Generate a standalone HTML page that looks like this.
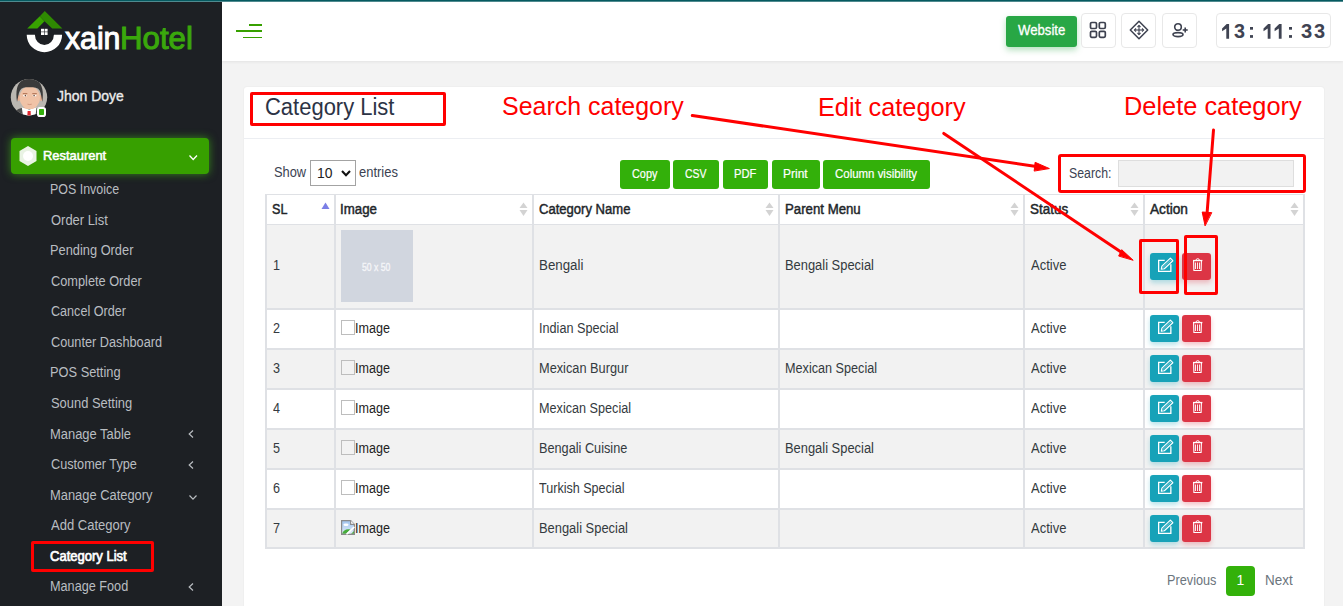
<!DOCTYPE html>
<html><head><meta charset="utf-8"><style>
html,body{margin:0;padding:0;}
body{width:1343px;height:606px;overflow:hidden;position:relative;font-family:"Liberation Sans",sans-serif;}
.t{position:absolute;white-space:nowrap;line-height:1;transform-origin:0 0;}
</style></head><body>
<div style="position:absolute;left:0px;top:0px;width:1343px;height:606px;background:#f3f3f3"></div>
<div style="position:absolute;left:0px;top:0px;width:222px;height:606px;background:#1d2024"></div>
<div style="position:absolute;left:222px;top:2px;width:1121px;height:59px;background:#fff;box-shadow:0 1px 3px rgba(0,0,0,.07)"></div>
<div style="position:absolute;left:0px;top:0px;width:1343px;height:1px;background:#055a60"></div>
<div style="position:absolute;left:0px;top:1px;width:1343px;height:1px;background:#4f8a8f"></div>
<svg style="position:absolute;left:0;top:0" width="222" height="70">
<polygon points="27.2,28.4 39.8,16.2 44.5,21.2 37.4,28.4" fill="#38a300"/>
<polygon points="39.8,16.2 44.8,11 62.4,28.4 52.2,28.4 44.8,21.6 44.5,21.2" fill="#2f8a02"/>
<path d="M26.7,34.7 A17.7,17.5 0 0 0 62.1,34.7 L53.9,34.7 A9.5,10.3 0 0 1 34.9,34.7 Z" fill="#fff"/>
<rect x="41" y="28.8" width="3" height="2.8" fill="#fff"/><rect x="44.6" y="28.8" width="3" height="2.8" fill="#fff"/>
<rect x="41" y="32.2" width="3" height="2.8" fill="#fff"/><rect x="44.6" y="32.2" width="3" height="2.8" fill="#fff"/>
</svg>
<div class="t" style="left:64.59787310419098px;top:23.16px;font-size:31px;color:#ffffff;-webkit-text-stroke:1.0px #ffffff;transform:scaleX(0.9746);">xain</div>
<div class="t" style="left:120.10322252127736px;top:23.16px;font-size:31px;color:#3aa80c;-webkit-text-stroke:1.0px #3aa80c;transform:scaleX(1.0068);">Hotel</div>
<svg style="position:absolute;left:10px;top:78px" width="38" height="40" viewBox="0 0 38 40">
<defs><clipPath id="cc"><circle cx="19" cy="19.2" r="18.2"/></clipPath></defs>
<circle cx="19" cy="19.2" r="18.2" fill="#bab7b1"/>
<g clip-path="url(#cc)">
<path d="M1,40 Q4,31.5 11.5,30 L26.5,30 Q34,31.5 37,40 Z" fill="#4a4a4a"/>
<rect x="14" y="24" width="10.5" height="7" fill="#e3aa8c"/>
<path d="M11.8,29.5 L19.2,31.5 L26.5,29.5 L25.5,38 L13,38 Z" fill="#fff"/>
<path d="M17.6,33 L20.6,33 L20.9,38 L17.3,38 Z" fill="#e0242c"/>
<ellipse cx="8.6" cy="20" rx="1.7" ry="3" fill="#e6b093"/><ellipse cx="31" cy="20" rx="1.7" ry="3" fill="#e6b093"/>
<ellipse cx="19.8" cy="19.6" rx="10.3" ry="11.4" fill="#f0c3a7"/>
<path d="M7,24 Q3.5,0.8 19.5,0.6 Q35.5,0.8 32.3,24 L30.8,15.5 Q29.5,8.8 22,9.2 L16.5,9.2 Q10.5,8.8 8.8,15.5 Z" fill="#3b3b3b"/>
<rect x="12.8" y="15" width="4.5" height="1.1" fill="#b87c5e"/><rect x="22.3" y="15" width="4.5" height="1.1" fill="#b87c5e"/>
<ellipse cx="15" cy="17.6" rx="2" ry="0.9" fill="#fff"/><circle cx="15.4" cy="17.6" r="0.8" fill="#6b4a3a"/>
<ellipse cx="24.5" cy="17.6" rx="2" ry="0.9" fill="#fff"/><circle cx="24.1" cy="17.6" r="0.8" fill="#6b4a3a"/>
<path d="M17.5,26.2 Q19.6,26.9 21.7,26.2" stroke="#c98a70" stroke-width="0.7" fill="none"/>
</g>
</svg>
<div style="position:absolute;left:36.7px;top:107.2px;width:9.3px;height:9.5px;background:#33b00c;border:2px solid #fff;border-radius:2.8px;box-sizing:border-box"></div>
<div class="t" style="left:56.61527772735524px;top:88.93px;font-size:14.5px;color:#ececec;-webkit-text-stroke:0.35px #ececec;transform:scaleX(0.9642);">Jhon Doye</div>
<div style="position:absolute;left:11px;top:138px;width:198px;height:36px;background:#37a000;border-radius:4px;box-shadow:0 0 9px rgba(70,200,20,.6)"></div>
<svg style="position:absolute;left:18px;top:145px" width="20" height="22" viewBox="0 0 20 22">
<polygon points="10,1 18.5,6 18.5,16 10,21 1.5,16 1.5,6" fill="#e9f3e4"/>
<circle cx="10" cy="11" r="5" fill="#fff"/>
</svg>
<div class="t" style="left:42.591515076241066px;top:148.57px;font-size:13.5px;color:#fff;-webkit-text-stroke:0.55px #fff;transform:scaleX(0.9569);">Restaurent</div>
<svg style="position:absolute;left:188px;top:153px" width="11" height="9"><polyline points="1.5,2.5 5.2,6.5 9,2.5" stroke="#fff" stroke-width="1.3" fill="none"/></svg>
<div class="t" style="left:50.20496780128795px;top:182.05px;font-size:14px;color:#b9bdc1;transform:scaleX(0.8884);">POS Invoice</div>
<div class="t" style="left:50.61764705882353px;top:212.61px;font-size:14px;color:#b9bdc1;transform:scaleX(0.9244);">Order List</div>
<div class="t" style="left:50.17410296411857px;top:243.17px;font-size:14px;color:#b9bdc1;transform:scaleX(0.916);">Pending Order</div>
<div class="t" style="left:50.56170212765958px;top:273.73px;font-size:14px;color:#b9bdc1;transform:scaleX(0.9119);">Complete Order</div>
<div class="t" style="left:50.57043330501275px;top:304.29px;font-size:14px;color:#b9bdc1;transform:scaleX(0.8994);">Cancel Order</div>
<div class="t" style="left:50.56390017411492px;top:334.85px;font-size:14px;color:#b9bdc1;transform:scaleX(0.9087);">Counter Dashboard</div>
<div class="t" style="left:50.17462686567164px;top:365.41px;font-size:14px;color:#b9bdc1;transform:scaleX(0.9155);">POS Setting</div>
<div class="t" style="left:50.61846153846154px;top:395.97px;font-size:14px;color:#b9bdc1;transform:scaleX(0.9231);">Sound Setting</div>
<div class="t" style="left:50.16631407648495px;top:426.53px;font-size:14px;color:#b9bdc1;transform:scaleX(0.9229);">Manage Table</div>
<svg style="position:absolute;left:186px;top:429.4px" width="10" height="10"><polyline points="7,1.5 3.2,5 7,8.5" stroke="#b9bdc1" stroke-width="1.2" fill="none"/></svg>
<div class="t" style="left:50.56506746626687px;top:457.09px;font-size:14px;color:#b9bdc1;transform:scaleX(0.907);">Customer Type</div>
<svg style="position:absolute;left:186px;top:459.9px" width="10" height="10"><polyline points="7,1.5 3.2,5 7,8.5" stroke="#b9bdc1" stroke-width="1.2" fill="none"/></svg>
<div class="t" style="left:50.16823379923761px;top:487.65px;font-size:14px;color:#b9bdc1;transform:scaleX(0.9212);">Manage Category</div>
<svg style="position:absolute;left:188px;top:493.5px" width="11" height="8"><polyline points="1.5,1.5 5,5.2 8.5,1.5" stroke="#b9bdc1" stroke-width="1.2" fill="none"/></svg>
<div class="t" style="left:51.2px;top:518.21px;font-size:14px;color:#b9bdc1;transform:scaleX(0.9298);">Add Category</div>
<div class="t" style="left:50.19919286321156px;top:548.77px;font-size:14px;color:#ffffff;-webkit-text-stroke:0.7px #ffffff;transform:scaleX(0.9297);">Category List</div>
<div class="t" style="left:50.18640132669984px;top:579.33px;font-size:14px;color:#b9bdc1;transform:scaleX(0.905);">Manage Food</div>
<svg style="position:absolute;left:186px;top:582.2px" width="10" height="10"><polyline points="7,1.5 3.2,5 7,8.5" stroke="#b9bdc1" stroke-width="1.2" fill="none"/></svg>
<div style="position:absolute;left:31px;top:541px;width:123px;height:31px;border:3px solid #f00;box-sizing:border-box;border-radius:2px"></div>
<div style="position:absolute;left:249px;top:24px;width:13px;height:2px;background:#37a000"></div>
<div style="position:absolute;left:236px;top:30px;width:26px;height:2px;background:#37a000"></div>
<div style="position:absolute;left:243px;top:37px;width:19px;height:1.3px;background:#37a000"></div>
<div style="position:absolute;left:1006px;top:16px;width:71px;height:31px;background:#28a745;border-radius:3px;box-shadow:0 3px 6px rgba(40,167,69,.35)"></div>
<div class="t" style="left:1017.9841863833898px;top:23.03px;font-size:14.5px;color:#fff;-webkit-text-stroke:0.3px #fff;transform:scaleX(0.9078);">Website</div>
<div style="position:absolute;left:1080.6px;top:13px;width:35px;height:35.2px;border:1px solid #e8e8e8;border-radius:4px;box-sizing:border-box;background:#fff"></div>
<div style="position:absolute;left:1121.4px;top:13px;width:35px;height:35.2px;border:1px solid #e8e8e8;border-radius:4px;box-sizing:border-box;background:#fff"></div>
<div style="position:absolute;left:1162.3px;top:13px;width:35px;height:35.2px;border:1px solid #e8e8e8;border-radius:4px;box-sizing:border-box;background:#fff"></div>
<svg style="position:absolute;left:1089px;top:21px" width="18" height="18" viewBox="0 0 18 18" fill="none" stroke="#3d414f" stroke-width="1.7">
<rect x="1.5" y="1.5" width="6" height="6" rx="1.3"/><rect x="10.3" y="1.5" width="6" height="6" rx="1.3"/>
<rect x="1.5" y="10.3" width="6" height="6" rx="1.3"/><rect x="10.3" y="10.3" width="6" height="6" rx="1.3"/>
</svg>
<svg style="position:absolute;left:1129px;top:20px" width="20" height="20" viewBox="0 0 20 20" fill="none" stroke="#3d414f" stroke-width="1.5">
<polygon points="10,1.3 18.7,10 10,18.7 1.3,10" stroke-linejoin="round"/>
<line x1="10" y1="5.5" x2="10" y2="14.5" stroke-width="1.1"/><line x1="5.5" y1="10" x2="14.5" y2="10" stroke-width="1.1"/>
<polyline points="8.5,7 10,5.5 11.5,7" stroke-width="1.1"/><polyline points="8.5,13 10,14.5 11.5,13" stroke-width="1.1"/>
<polyline points="7,8.5 5.5,10 7,11.5" stroke-width="1.1"/><polyline points="13,8.5 14.5,10 13,11.5" stroke-width="1.1"/>
</svg>
<svg style="position:absolute;left:1171px;top:22px" width="18" height="16" viewBox="0 0 18 16" fill="none" stroke="#3d414f" stroke-width="1.6">
<circle cx="7" cy="5" r="3.3"/><ellipse cx="7" cy="12.6" rx="5" ry="2"/>
<line x1="14.2" y1="5.5" x2="14.2" y2="10.5"/><line x1="11.7" y1="8" x2="16.7" y2="8"/>
</svg>
<div style="position:absolute;left:1216px;top:13px;width:115px;height:35px;border:1px solid #e8e8e8;border-radius:4px;box-sizing:border-box;background:#fff"></div>
<div class="t" style="left:1233.604px;top:21.45px;font-size:20.5px;color:#3f4352;font-weight:bold;transform:scaleX(0.9659);">3</div>
<div class="t" style="left:1300.796px;top:21.45px;font-size:20.5px;color:#3f4352;font-weight:bold;transform:scaleX(0.9854);">3</div>
<div class="t" style="left:1313.6px;top:21.45px;font-size:20.5px;color:#3f4352;font-weight:bold;transform:scaleX(0.9756);">3</div>
<svg style="position:absolute;left:0;top:0" width="1343" height="60"><path d="M1226.3,24 H1229.1 V38.7 H1226.3 V28.6 L1222.1,31.2 V28.4 L1226.6999999999998,24 Z" fill="#3f4352"/><path d="M1267.7,24 H1270.5 V38.7 H1267.7 V28.6 L1263.5,31.2 V28.4 L1268.1,24 Z" fill="#3f4352"/><path d="M1278.8,24 H1281.6 V38.7 H1278.8 V28.6 L1274.6,31.2 V28.4 L1279.1999999999998,24 Z" fill="#3f4352"/><rect x="1250" y="27" width="3" height="2.7" fill="#3f4352"/><rect x="1250" y="35.1" width="3" height="2.7" fill="#3f4352"/><rect x="1289" y="27" width="3" height="2.7" fill="#3f4352"/><rect x="1289" y="35.1" width="3" height="2.7" fill="#3f4352"/></svg>
<div style="position:absolute;left:244px;top:87px;width:1080px;height:530px;background:#fff;border-radius:3px;box-shadow:0 0 2px rgba(0,0,0,.07)"></div>
<div style="position:absolute;left:244px;top:138px;width:1080px;height:1px;background:#eceef2"></div>
<div class="t" style="left:265.00145672664956px;top:95.93px;font-size:23px;color:#2c3345;transform:scaleX(0.9553);">Category List</div>
<div style="position:absolute;left:250px;top:92px;width:196px;height:34px;border:3px solid #f00;box-sizing:border-box;border-radius:2px"></div>
<div class="t" style="left:502.47671043538355px;top:93.54px;font-size:25px;color:#f00;transform:scaleX(0.9985);">Search category</div>
<div class="t" style="left:818.0760208514336px;top:94.64px;font-size:25px;color:#f00;transform:scaleX(1.012);">Edit category</div>
<div class="t" style="left:1124.1702527075813px;top:93.64px;font-size:25px;color:#f00;transform:scaleX(1.0149);">Delete category</div>
<div class="t" style="left:274.1219512195122px;top:165.15px;font-size:14px;color:#3b4252;transform:scaleX(0.9175);">Show</div>
<div style="position:absolute;left:310px;top:160px;width:46px;height:26px;border:1px solid #a3a3a3;box-sizing:border-box;background:#fff"></div>
<div class="t" style="left:317.4575px;top:165.95px;font-size:14px;color:#222;transform:scaleX(0.9929);">10</div>
<svg style="position:absolute;left:340px;top:169px" width="12" height="9"><polyline points="2,2 6,6.2 10,2" stroke="#111" stroke-width="2.1" fill="none"/></svg>
<div class="t" style="left:359.0817094017094px;top:165.15px;font-size:14px;color:#3b4252;transform:scaleX(0.9255);">entries</div>
<div style="position:absolute;left:620px;top:160px;width:50px;height:29px;background:#33b00a;border-radius:3px"></div>
<div class="t" style="left:631.8566126065875px;top:167.00px;font-size:13px;color:#fff;-webkit-text-stroke:0.2px #fff;transform:scaleX(0.836);">Copy</div>
<div style="position:absolute;left:673px;top:160px;width:46px;height:29px;background:#33b00a;border-radius:3px"></div>
<div class="t" style="left:685.07782219684px;top:167.00px;font-size:13px;color:#fff;-webkit-text-stroke:0.2px #fff;transform:scaleX(0.8034);">CSV</div>
<div style="position:absolute;left:723px;top:160px;width:45px;height:29px;background:#33b00a;border-radius:3px"></div>
<div class="t" style="left:734.0051948051948px;top:167.00px;font-size:13px;color:#fff;-webkit-text-stroke:0.2px #fff;transform:scaleX(0.8604);">PDF</div>
<div style="position:absolute;left:772px;top:160px;width:48px;height:29px;background:#33b00a;border-radius:3px"></div>
<div class="t" style="left:783.1409918636188px;top:167.00px;font-size:13px;color:#fff;-webkit-text-stroke:0.2px #fff;transform:scaleX(0.9221);">Print</div>
<div style="position:absolute;left:823px;top:160px;width:107px;height:29px;background:#33b00a;border-radius:3px"></div>
<div class="t" style="left:835.1275010780508px;top:167.00px;font-size:13px;color:#fff;-webkit-text-stroke:0.2px #fff;transform:scaleX(0.8808);">Column visibility</div>
<div style="position:absolute;left:1118px;top:160px;width:176px;height:27px;background:#f2f2f2;border:1px solid #dedede;box-sizing:border-box"></div>
<div class="t" style="left:1069.146153846154px;top:166.15px;font-size:14px;color:#3b4252;transform:scaleX(0.8791);">Search:</div>
<div style="position:absolute;left:1058px;top:154px;width:248px;height:39px;border:3px solid #f00;box-sizing:border-box;border-radius:3px"></div>
<div style="position:absolute;left:265px;top:194px;width:1040px;height:355px;background:#dfe1e5"></div>
<div style="position:absolute;left:267px;top:195px;width:67px;height:29px;background:#fff"></div>
<div style="position:absolute;left:336px;top:195px;width:196px;height:29px;background:#fff"></div>
<div style="position:absolute;left:534px;top:195px;width:244px;height:29px;background:#fff"></div>
<div style="position:absolute;left:780px;top:195px;width:243px;height:29px;background:#fff"></div>
<div style="position:absolute;left:1025px;top:195px;width:118px;height:29px;background:#fff"></div>
<div style="position:absolute;left:1145px;top:195px;width:158px;height:29px;background:#fff"></div>
<div style="position:absolute;left:267px;top:225px;width:67px;height:83px;background:#f2f2f2"></div>
<div style="position:absolute;left:336px;top:225px;width:196px;height:83px;background:#f2f2f2"></div>
<div style="position:absolute;left:534px;top:225px;width:244px;height:83px;background:#f2f2f2"></div>
<div style="position:absolute;left:780px;top:225px;width:243px;height:83px;background:#f2f2f2"></div>
<div style="position:absolute;left:1025px;top:225px;width:118px;height:83px;background:#f2f2f2"></div>
<div style="position:absolute;left:1145px;top:225px;width:158px;height:83px;background:#f2f2f2"></div>
<div style="position:absolute;left:267px;top:310px;width:67px;height:38px;background:#fff"></div>
<div style="position:absolute;left:336px;top:310px;width:196px;height:38px;background:#fff"></div>
<div style="position:absolute;left:534px;top:310px;width:244px;height:38px;background:#fff"></div>
<div style="position:absolute;left:780px;top:310px;width:243px;height:38px;background:#fff"></div>
<div style="position:absolute;left:1025px;top:310px;width:118px;height:38px;background:#fff"></div>
<div style="position:absolute;left:1145px;top:310px;width:158px;height:38px;background:#fff"></div>
<div style="position:absolute;left:267px;top:350px;width:67px;height:38px;background:#f2f2f2"></div>
<div style="position:absolute;left:336px;top:350px;width:196px;height:38px;background:#f2f2f2"></div>
<div style="position:absolute;left:534px;top:350px;width:244px;height:38px;background:#f2f2f2"></div>
<div style="position:absolute;left:780px;top:350px;width:243px;height:38px;background:#f2f2f2"></div>
<div style="position:absolute;left:1025px;top:350px;width:118px;height:38px;background:#f2f2f2"></div>
<div style="position:absolute;left:1145px;top:350px;width:158px;height:38px;background:#f2f2f2"></div>
<div style="position:absolute;left:267px;top:390px;width:67px;height:38px;background:#fff"></div>
<div style="position:absolute;left:336px;top:390px;width:196px;height:38px;background:#fff"></div>
<div style="position:absolute;left:534px;top:390px;width:244px;height:38px;background:#fff"></div>
<div style="position:absolute;left:780px;top:390px;width:243px;height:38px;background:#fff"></div>
<div style="position:absolute;left:1025px;top:390px;width:118px;height:38px;background:#fff"></div>
<div style="position:absolute;left:1145px;top:390px;width:158px;height:38px;background:#fff"></div>
<div style="position:absolute;left:267px;top:430px;width:67px;height:38px;background:#f2f2f2"></div>
<div style="position:absolute;left:336px;top:430px;width:196px;height:38px;background:#f2f2f2"></div>
<div style="position:absolute;left:534px;top:430px;width:244px;height:38px;background:#f2f2f2"></div>
<div style="position:absolute;left:780px;top:430px;width:243px;height:38px;background:#f2f2f2"></div>
<div style="position:absolute;left:1025px;top:430px;width:118px;height:38px;background:#f2f2f2"></div>
<div style="position:absolute;left:1145px;top:430px;width:158px;height:38px;background:#f2f2f2"></div>
<div style="position:absolute;left:267px;top:470px;width:67px;height:38px;background:#fff"></div>
<div style="position:absolute;left:336px;top:470px;width:196px;height:38px;background:#fff"></div>
<div style="position:absolute;left:534px;top:470px;width:244px;height:38px;background:#fff"></div>
<div style="position:absolute;left:780px;top:470px;width:243px;height:38px;background:#fff"></div>
<div style="position:absolute;left:1025px;top:470px;width:118px;height:38px;background:#fff"></div>
<div style="position:absolute;left:1145px;top:470px;width:158px;height:38px;background:#fff"></div>
<div style="position:absolute;left:267px;top:510px;width:67px;height:37px;background:#f2f2f2"></div>
<div style="position:absolute;left:336px;top:510px;width:196px;height:37px;background:#f2f2f2"></div>
<div style="position:absolute;left:534px;top:510px;width:244px;height:37px;background:#f2f2f2"></div>
<div style="position:absolute;left:780px;top:510px;width:243px;height:37px;background:#f2f2f2"></div>
<div style="position:absolute;left:1025px;top:510px;width:118px;height:37px;background:#f2f2f2"></div>
<div style="position:absolute;left:1145px;top:510px;width:158px;height:37px;background:#f2f2f2"></div>
<div class="t" style="left:272.1092233009708px;top:202.15px;font-size:14px;color:#212529;-webkit-text-stroke:0.45px #212529;transform:scaleX(0.8981);">SL</div>
<svg style="position:absolute;left:321px;top:202px" width="9" height="8"><polygon points="4.5,0.5 8.5,7 0.5,7" fill="#7b7fe6"/></svg>
<div class="t" style="left:339.98043275632483px;top:202.15px;font-size:14px;color:#212529;-webkit-text-stroke:0.45px #212529;transform:scaleX(0.9481);">Image</div>
<svg style="position:absolute;left:519px;top:202px" width="9" height="15"><polygon points="4.5,0.5 8.5,6 0.5,6" fill="#d3d3d3"/><polygon points="4.5,14 8.5,8 0.5,8" fill="#d3d3d3"/></svg>
<div class="t" style="left:538.7224637308365px;top:202.15px;font-size:14px;color:#212529;-webkit-text-stroke:0.45px #212529;transform:scaleX(0.9322);">Category Name</div>
<svg style="position:absolute;left:765px;top:202px" width="9" height="15"><polygon points="4.5,0.5 8.5,6 0.5,6" fill="#d3d3d3"/><polygon points="4.5,14 8.5,8 0.5,8" fill="#d3d3d3"/></svg>
<div class="t" style="left:784.5172934962453px;top:202.15px;font-size:14px;color:#212529;-webkit-text-stroke:0.45px #212529;transform:scaleX(0.9444);">Parent Menu</div>
<svg style="position:absolute;left:1010px;top:202px" width="9" height="15"><polygon points="4.5,0.5 8.5,6 0.5,6" fill="#d3d3d3"/><polygon points="4.5,14 8.5,8 0.5,8" fill="#d3d3d3"/></svg>
<div class="t" style="left:1029.969541260892px;top:202.15px;font-size:14px;color:#212529;-webkit-text-stroke:0.45px #212529;transform:scaleX(0.961);">Status</div>
<svg style="position:absolute;left:1130px;top:202px" width="9" height="15"><polygon points="4.5,0.5 8.5,6 0.5,6" fill="#d3d3d3"/><polygon points="4.5,14 8.5,8 0.5,8" fill="#d3d3d3"/></svg>
<div class="t" style="left:1149.775px;top:202.15px;font-size:14px;color:#212529;-webkit-text-stroke:0.45px #212529;transform:scaleX(0.9759);">Action</div>
<svg style="position:absolute;left:1290px;top:202px" width="9" height="15"><polygon points="4.5,0.5 8.5,6 0.5,6" fill="#d3d3d3"/><polygon points="4.5,14 8.5,8 0.5,8" fill="#d3d3d3"/></svg>
<div class="t" style="left:273px;top:258.25px;font-size:14px;color:#343a40;transform:scaleX(0.9);">1</div>
<div style="position:absolute;left:341px;top:230px;width:72px;height:72px;background:#d1d6df"></div>
<div class="t" style="left:361.75429779239084px;top:262.07px;font-size:11.5px;color:#f4f5f8;-webkit-text-stroke:0.4px #f4f5f8;transform:scaleX(0.7515);">50 x 50</div>
<div class="t" style="left:538.6341692789969px;top:258.25px;font-size:14px;color:#343a40;transform:scaleX(0.9516);">Bengali</div>
<div class="t" style="left:784.7681245366938px;top:258.25px;font-size:14px;color:#343a40;transform:scaleX(0.9213);">Bengali Special</div>
<div class="t" style="left:1030.7px;top:258.25px;font-size:14px;color:#343a40;transform:scaleX(0.9275);">Active</div>
<div style="position:absolute;left:1150px;top:253px;width:29px;height:27px;background:#17a2b8;border-radius:3px;box-shadow:0 3px 5px rgba(23,162,184,.3)"></div>
<div style="position:absolute;left:1182px;top:253px;width:29px;height:27px;background:#dc3545;border-radius:3px;box-shadow:0 3px 5px rgba(220,53,69,.3)"></div>
<svg style="position:absolute;left:1150px;top:253px" width="29" height="27" viewBox="0 0 29 27" fill="none" stroke="#fff">
<path d="M14.7,7.4 H8.65 V18.35 H20.85 V11.2" stroke-width="1.3"/>
<polygon points="11.3,16.2 11.89,13.17 20.37,5.09 22.83,7.71 14.35,15.79" stroke-width="1.15" stroke-linejoin="round"/>
<line x1="12.5" y1="14.9" x2="21.2" y2="6.6" stroke-width="0.6" stroke="#bfe6ec"/>
</svg>
<svg style="position:absolute;left:1182px;top:253px" width="29" height="27" viewBox="0 0 29 27" fill="none" stroke="#fff">
<rect x="11" y="6.9" width="9.4" height="1.3" fill="#fff" stroke="none"/>
<path d="M14,7 Q14.2,5.7 15.7,5.7 Q17.2,5.7 17.4,7" stroke-width="1"/>
<path d="M11.6,8 L11.9,17.5 H19.1 L19.4,8" stroke-width="1.1"/>
<line x1="13.5" y1="9.5" x2="13.5" y2="16" stroke-width="0.9"/><line x1="15.5" y1="9.5" x2="15.5" y2="16" stroke-width="0.9"/><line x1="17.5" y1="9.5" x2="17.5" y2="16" stroke-width="0.9"/>
</svg>
<div class="t" style="left:273px;top:321.15px;font-size:14px;color:#343a40;transform:scaleX(0.9);">2</div>
<div style="position:absolute;left:341px;top:320.0px;width:14px;height:15px;border:1px solid #bdbdbd;box-sizing:border-box"></div>
<div class="t" style="left:355.3690566037736px;top:321.15px;font-size:14px;color:#222;transform:scaleX(0.8976);">Image</div>
<div class="t" style="left:538.561224489796px;top:321.15px;font-size:14px;color:#343a40;transform:scaleX(0.9038);">Indian Special</div>
<div class="t" style="left:1030.7px;top:321.15px;font-size:14px;color:#343a40;transform:scaleX(0.9275);">Active</div>
<div style="position:absolute;left:1150px;top:315px;width:29px;height:27px;background:#17a2b8;border-radius:3px;box-shadow:0 3px 5px rgba(23,162,184,.3)"></div>
<div style="position:absolute;left:1182px;top:315px;width:29px;height:27px;background:#dc3545;border-radius:3px;box-shadow:0 3px 5px rgba(220,53,69,.3)"></div>
<svg style="position:absolute;left:1150px;top:315px" width="29" height="27" viewBox="0 0 29 27" fill="none" stroke="#fff">
<path d="M14.7,7.4 H8.65 V18.35 H20.85 V11.2" stroke-width="1.3"/>
<polygon points="11.3,16.2 11.89,13.17 20.37,5.09 22.83,7.71 14.35,15.79" stroke-width="1.15" stroke-linejoin="round"/>
<line x1="12.5" y1="14.9" x2="21.2" y2="6.6" stroke-width="0.6" stroke="#bfe6ec"/>
</svg>
<svg style="position:absolute;left:1182px;top:315px" width="29" height="27" viewBox="0 0 29 27" fill="none" stroke="#fff">
<rect x="11" y="6.9" width="9.4" height="1.3" fill="#fff" stroke="none"/>
<path d="M14,7 Q14.2,5.7 15.7,5.7 Q17.2,5.7 17.4,7" stroke-width="1"/>
<path d="M11.6,8 L11.9,17.5 H19.1 L19.4,8" stroke-width="1.1"/>
<line x1="13.5" y1="9.5" x2="13.5" y2="16" stroke-width="0.9"/><line x1="15.5" y1="9.5" x2="15.5" y2="16" stroke-width="0.9"/><line x1="17.5" y1="9.5" x2="17.5" y2="16" stroke-width="0.9"/>
</svg>
<div class="t" style="left:273px;top:361.15px;font-size:14px;color:#343a40;transform:scaleX(0.9);">3</div>
<div style="position:absolute;left:341px;top:360.0px;width:14px;height:15px;border:1px solid #bdbdbd;box-sizing:border-box"></div>
<div class="t" style="left:355.3690566037736px;top:361.15px;font-size:14px;color:#222;transform:scaleX(0.8976);">Image</div>
<div class="t" style="left:538.6788712011578px;top:361.15px;font-size:14px;color:#343a40;transform:scaleX(0.9117);">Mexican Burgur</div>
<div class="t" style="left:784.7886475122634px;top:361.15px;font-size:14px;color:#343a40;transform:scaleX(0.903);">Mexican Special</div>
<div class="t" style="left:1030.7px;top:361.15px;font-size:14px;color:#343a40;transform:scaleX(0.9275);">Active</div>
<div style="position:absolute;left:1150px;top:355px;width:29px;height:27px;background:#17a2b8;border-radius:3px;box-shadow:0 3px 5px rgba(23,162,184,.3)"></div>
<div style="position:absolute;left:1182px;top:355px;width:29px;height:27px;background:#dc3545;border-radius:3px;box-shadow:0 3px 5px rgba(220,53,69,.3)"></div>
<svg style="position:absolute;left:1150px;top:355px" width="29" height="27" viewBox="0 0 29 27" fill="none" stroke="#fff">
<path d="M14.7,7.4 H8.65 V18.35 H20.85 V11.2" stroke-width="1.3"/>
<polygon points="11.3,16.2 11.89,13.17 20.37,5.09 22.83,7.71 14.35,15.79" stroke-width="1.15" stroke-linejoin="round"/>
<line x1="12.5" y1="14.9" x2="21.2" y2="6.6" stroke-width="0.6" stroke="#bfe6ec"/>
</svg>
<svg style="position:absolute;left:1182px;top:355px" width="29" height="27" viewBox="0 0 29 27" fill="none" stroke="#fff">
<rect x="11" y="6.9" width="9.4" height="1.3" fill="#fff" stroke="none"/>
<path d="M14,7 Q14.2,5.7 15.7,5.7 Q17.2,5.7 17.4,7" stroke-width="1"/>
<path d="M11.6,8 L11.9,17.5 H19.1 L19.4,8" stroke-width="1.1"/>
<line x1="13.5" y1="9.5" x2="13.5" y2="16" stroke-width="0.9"/><line x1="15.5" y1="9.5" x2="15.5" y2="16" stroke-width="0.9"/><line x1="17.5" y1="9.5" x2="17.5" y2="16" stroke-width="0.9"/>
</svg>
<div class="t" style="left:273px;top:401.15px;font-size:14px;color:#343a40;transform:scaleX(0.9);">4</div>
<div style="position:absolute;left:341px;top:400.0px;width:14px;height:15px;border:1px solid #bdbdbd;box-sizing:border-box"></div>
<div class="t" style="left:355.3690566037736px;top:401.15px;font-size:14px;color:#222;transform:scaleX(0.8976);">Image</div>
<div class="t" style="left:538.6886475122635px;top:401.15px;font-size:14px;color:#343a40;transform:scaleX(0.903);">Mexican Special</div>
<div class="t" style="left:1030.7px;top:401.15px;font-size:14px;color:#343a40;transform:scaleX(0.9275);">Active</div>
<div style="position:absolute;left:1150px;top:395px;width:29px;height:27px;background:#17a2b8;border-radius:3px;box-shadow:0 3px 5px rgba(23,162,184,.3)"></div>
<div style="position:absolute;left:1182px;top:395px;width:29px;height:27px;background:#dc3545;border-radius:3px;box-shadow:0 3px 5px rgba(220,53,69,.3)"></div>
<svg style="position:absolute;left:1150px;top:395px" width="29" height="27" viewBox="0 0 29 27" fill="none" stroke="#fff">
<path d="M14.7,7.4 H8.65 V18.35 H20.85 V11.2" stroke-width="1.3"/>
<polygon points="11.3,16.2 11.89,13.17 20.37,5.09 22.83,7.71 14.35,15.79" stroke-width="1.15" stroke-linejoin="round"/>
<line x1="12.5" y1="14.9" x2="21.2" y2="6.6" stroke-width="0.6" stroke="#bfe6ec"/>
</svg>
<svg style="position:absolute;left:1182px;top:395px" width="29" height="27" viewBox="0 0 29 27" fill="none" stroke="#fff">
<rect x="11" y="6.9" width="9.4" height="1.3" fill="#fff" stroke="none"/>
<path d="M14,7 Q14.2,5.7 15.7,5.7 Q17.2,5.7 17.4,7" stroke-width="1"/>
<path d="M11.6,8 L11.9,17.5 H19.1 L19.4,8" stroke-width="1.1"/>
<line x1="13.5" y1="9.5" x2="13.5" y2="16" stroke-width="0.9"/><line x1="15.5" y1="9.5" x2="15.5" y2="16" stroke-width="0.9"/><line x1="17.5" y1="9.5" x2="17.5" y2="16" stroke-width="0.9"/>
</svg>
<div class="t" style="left:273px;top:441.15px;font-size:14px;color:#343a40;transform:scaleX(0.9);">5</div>
<div style="position:absolute;left:341px;top:440.0px;width:14px;height:15px;border:1px solid #bdbdbd;box-sizing:border-box"></div>
<div class="t" style="left:355.3690566037736px;top:441.15px;font-size:14px;color:#222;transform:scaleX(0.8976);">Image</div>
<div class="t" style="left:538.6833089311859px;top:441.15px;font-size:14px;color:#343a40;transform:scaleX(0.9078);">Bengali Cuisine</div>
<div class="t" style="left:784.7681245366938px;top:441.15px;font-size:14px;color:#343a40;transform:scaleX(0.9213);">Bengali Special</div>
<div class="t" style="left:1030.7px;top:441.15px;font-size:14px;color:#343a40;transform:scaleX(0.9275);">Active</div>
<div style="position:absolute;left:1150px;top:435px;width:29px;height:27px;background:#17a2b8;border-radius:3px;box-shadow:0 3px 5px rgba(23,162,184,.3)"></div>
<div style="position:absolute;left:1182px;top:435px;width:29px;height:27px;background:#dc3545;border-radius:3px;box-shadow:0 3px 5px rgba(220,53,69,.3)"></div>
<svg style="position:absolute;left:1150px;top:435px" width="29" height="27" viewBox="0 0 29 27" fill="none" stroke="#fff">
<path d="M14.7,7.4 H8.65 V18.35 H20.85 V11.2" stroke-width="1.3"/>
<polygon points="11.3,16.2 11.89,13.17 20.37,5.09 22.83,7.71 14.35,15.79" stroke-width="1.15" stroke-linejoin="round"/>
<line x1="12.5" y1="14.9" x2="21.2" y2="6.6" stroke-width="0.6" stroke="#bfe6ec"/>
</svg>
<svg style="position:absolute;left:1182px;top:435px" width="29" height="27" viewBox="0 0 29 27" fill="none" stroke="#fff">
<rect x="11" y="6.9" width="9.4" height="1.3" fill="#fff" stroke="none"/>
<path d="M14,7 Q14.2,5.7 15.7,5.7 Q17.2,5.7 17.4,7" stroke-width="1"/>
<path d="M11.6,8 L11.9,17.5 H19.1 L19.4,8" stroke-width="1.1"/>
<line x1="13.5" y1="9.5" x2="13.5" y2="16" stroke-width="0.9"/><line x1="15.5" y1="9.5" x2="15.5" y2="16" stroke-width="0.9"/><line x1="17.5" y1="9.5" x2="17.5" y2="16" stroke-width="0.9"/>
</svg>
<div class="t" style="left:273px;top:481.15px;font-size:14px;color:#343a40;transform:scaleX(0.9);">6</div>
<div style="position:absolute;left:341px;top:480.0px;width:14px;height:15px;border:1px solid #bdbdbd;box-sizing:border-box"></div>
<div class="t" style="left:355.3690566037736px;top:481.15px;font-size:14px;color:#222;transform:scaleX(0.8976);">Image</div>
<div class="t" style="left:539.4487332339792px;top:481.15px;font-size:14px;color:#343a40;transform:scaleX(0.8974);">Turkish Special</div>
<div class="t" style="left:1030.7px;top:481.15px;font-size:14px;color:#343a40;transform:scaleX(0.9275);">Active</div>
<div style="position:absolute;left:1150px;top:475px;width:29px;height:27px;background:#17a2b8;border-radius:3px;box-shadow:0 3px 5px rgba(23,162,184,.3)"></div>
<div style="position:absolute;left:1182px;top:475px;width:29px;height:27px;background:#dc3545;border-radius:3px;box-shadow:0 3px 5px rgba(220,53,69,.3)"></div>
<svg style="position:absolute;left:1150px;top:475px" width="29" height="27" viewBox="0 0 29 27" fill="none" stroke="#fff">
<path d="M14.7,7.4 H8.65 V18.35 H20.85 V11.2" stroke-width="1.3"/>
<polygon points="11.3,16.2 11.89,13.17 20.37,5.09 22.83,7.71 14.35,15.79" stroke-width="1.15" stroke-linejoin="round"/>
<line x1="12.5" y1="14.9" x2="21.2" y2="6.6" stroke-width="0.6" stroke="#bfe6ec"/>
</svg>
<svg style="position:absolute;left:1182px;top:475px" width="29" height="27" viewBox="0 0 29 27" fill="none" stroke="#fff">
<rect x="11" y="6.9" width="9.4" height="1.3" fill="#fff" stroke="none"/>
<path d="M14,7 Q14.2,5.7 15.7,5.7 Q17.2,5.7 17.4,7" stroke-width="1"/>
<path d="M11.6,8 L11.9,17.5 H19.1 L19.4,8" stroke-width="1.1"/>
<line x1="13.5" y1="9.5" x2="13.5" y2="16" stroke-width="0.9"/><line x1="15.5" y1="9.5" x2="15.5" y2="16" stroke-width="0.9"/><line x1="17.5" y1="9.5" x2="17.5" y2="16" stroke-width="0.9"/>
</svg>
<div class="t" style="left:273px;top:520.65px;font-size:14px;color:#343a40;transform:scaleX(0.9);">7</div>
<svg style="position:absolute;left:341px;top:519.5px" width="14" height="15" viewBox="0 0 14 15">
<defs><linearGradient id="sk" x1="0" y1="0" x2="0" y2="1"><stop offset="0" stop-color="#9fc3ee"/><stop offset="1" stop-color="#e3eef9"/></linearGradient></defs>
<path d="M0.6,0.6 H9.6 L13.4,4.4 V14.4 H0.6 Z" fill="url(#sk)" stroke="#8a8a8a" stroke-width="1.2"/>
<ellipse cx="5" cy="4.8" rx="2.6" ry="1.3" fill="#fff"/>
<path d="M1.2,13.8 Q2.5,9.2 7.5,9.3 L9.5,9.6 L5.2,13.8 Z" fill="#48ad3c"/>
<path d="M10.2,13.8 L13,11 V13.8 Z" fill="#48ad3c"/>
<path d="M5.2,14.6 L13.4,6.8" stroke="#fff" stroke-width="1.6"/>
<path d="M9.6,0.6 V4.4 H13.4" fill="#fff" stroke="#8a8a8a" stroke-width="1.1"/>
<path d="M0.6,14.4 H5.5 M9.8,14.4 H13.4 V9" fill="none" stroke="#8a8a8a" stroke-width="1.2"/>
</svg>
<div class="t" style="left:355.3690566037736px;top:520.65px;font-size:14px;color:#222;transform:scaleX(0.8976);">Image</div>
<div class="t" style="left:538.6681245366939px;top:520.65px;font-size:14px;color:#343a40;transform:scaleX(0.9213);">Bengali Special</div>
<div class="t" style="left:1030.7px;top:520.65px;font-size:14px;color:#343a40;transform:scaleX(0.9275);">Active</div>
<div style="position:absolute;left:1150px;top:515px;width:29px;height:27px;background:#17a2b8;border-radius:3px;box-shadow:0 3px 5px rgba(23,162,184,.3)"></div>
<div style="position:absolute;left:1182px;top:515px;width:29px;height:27px;background:#dc3545;border-radius:3px;box-shadow:0 3px 5px rgba(220,53,69,.3)"></div>
<svg style="position:absolute;left:1150px;top:515px" width="29" height="27" viewBox="0 0 29 27" fill="none" stroke="#fff">
<path d="M14.7,7.4 H8.65 V18.35 H20.85 V11.2" stroke-width="1.3"/>
<polygon points="11.3,16.2 11.89,13.17 20.37,5.09 22.83,7.71 14.35,15.79" stroke-width="1.15" stroke-linejoin="round"/>
<line x1="12.5" y1="14.9" x2="21.2" y2="6.6" stroke-width="0.6" stroke="#bfe6ec"/>
</svg>
<svg style="position:absolute;left:1182px;top:515px" width="29" height="27" viewBox="0 0 29 27" fill="none" stroke="#fff">
<rect x="11" y="6.9" width="9.4" height="1.3" fill="#fff" stroke="none"/>
<path d="M14,7 Q14.2,5.7 15.7,5.7 Q17.2,5.7 17.4,7" stroke-width="1"/>
<path d="M11.6,8 L11.9,17.5 H19.1 L19.4,8" stroke-width="1.1"/>
<line x1="13.5" y1="9.5" x2="13.5" y2="16" stroke-width="0.9"/><line x1="15.5" y1="9.5" x2="15.5" y2="16" stroke-width="0.9"/><line x1="17.5" y1="9.5" x2="17.5" y2="16" stroke-width="0.9"/>
</svg>
<div class="t" style="left:1166.8827814569538px;top:572.95px;font-size:14px;color:#6c757d;transform:scaleX(0.9082);">Previous</div>
<div style="position:absolute;left:1226px;top:566px;width:29px;height:30px;background:#33b10a;border-radius:4px"></div>
<div class="t" style="left:1236.5px;top:572.95px;font-size:14px;color:#fff;">1</div>
<div class="t" style="left:1264.5238578680203px;top:572.95px;font-size:14px;color:#6c757d;transform:scaleX(0.9608);">Next</div>
<div style="position:absolute;left:1139px;top:238.5px;width:40px;height:55px;border:3px solid #f00;box-sizing:border-box;border-radius:2px"></div>
<div style="position:absolute;left:1184px;top:235px;width:34px;height:60px;border:3px solid #f00;box-sizing:border-box;border-radius:2px"></div>
<svg style="position:absolute;left:0;top:0" width="1343" height="606">
<g stroke="#f00" stroke-width="3" stroke-linecap="round" fill="#f00">
<line x1="692.3" y1="115.5" x2="1038" y2="166.8"/>
<polygon points="1049,168.4 1035.1,162.3 1034.2,170.7" stroke-width="1"/>
<line x1="943.8" y1="133.4" x2="1124" y2="254"/>
<polygon points="1132.9,260 1121.7,249.7 1118.8,255.7" stroke-width="1"/>
<line x1="1213.5" y1="130" x2="1207" y2="214"/>
<polygon points="1205,225.5 1202.2,212 1211.4,212.6" stroke-width="1"/>
</g></svg>
</body></html>
